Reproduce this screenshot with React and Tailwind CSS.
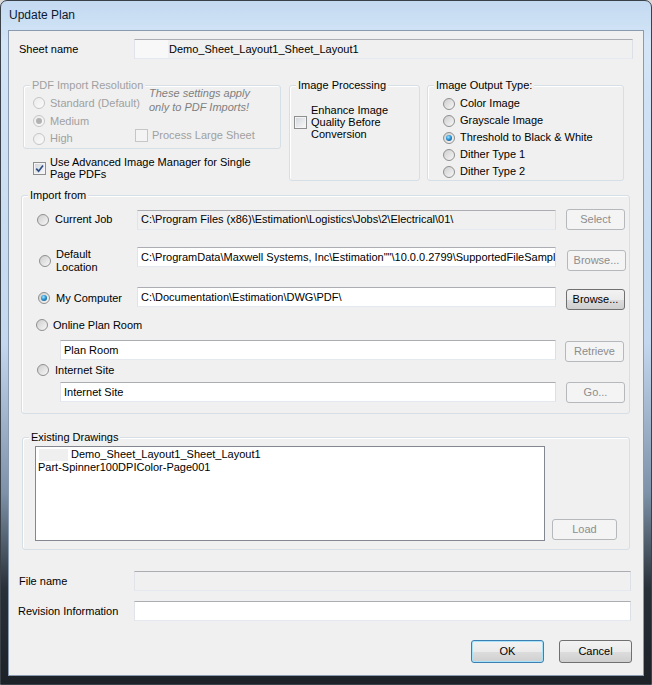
import React from 'react';

// Win7-style dialog controls
function Radio({ checked, disabled, className = '' }) {
  const ring = disabled
    ? 'border-[#c6c6c6] bg-[linear-gradient(135deg,#ebebeb,#fbfbfb)]'
    : 'border-[#8e8f8f] bg-[linear-gradient(135deg,#cdcdcd,#f8f8f8)]';
  return (
    <span className={`flex h-[12px] w-[12px] shrink-0 items-center justify-center rounded-full border ${ring} ${className}`}>
      {checked && (
        <span
          className={
            disabled
              ? 'h-[6px] w-[6px] rounded-full bg-[#b2b2b2]'
              : 'h-[6px] w-[6px] rounded-full bg-[radial-gradient(circle_at_40%_35%,#9fe6ff_0%,#2b94d4_45%,#0b3c66_100%)]'
          }
        />
      )}
    </span>
  );
}

function Check({ checked, disabled }) {
  return (
    <span
      className={`flex h-[13px] w-[13px] shrink-0 items-center justify-center border ${
        disabled
          ? 'border-[#c6c6c6] bg-[#f4f4f4]'
          : 'border-[#8e8f8f] bg-[linear-gradient(135deg,#d0d4da,#fafafa)] shadow-[inset_0_0_0_1px_#f4f4f4]'
      }`}
    >
      {checked && (
        <svg width="9" height="9" viewBox="0 0 9 9">
          <path d="M1.2 4.6 L3.6 7.2 L8 1.4" fill="none" stroke="#2f4f86" strokeWidth="1.7" />
        </svg>
      )}
    </span>
  );
}

function Btn({ children, disabled, primary, className = '' }) {
  let look = 'border-[#707070] bg-[linear-gradient(#f2f2f2_0%,#ebebeb_50%,#dddddd_50%,#cfcfcf_100%)] text-black';
  if (disabled) look = 'border-[#b5b9bc] bg-[#f4f4f4] text-[#8d8d8d]';
  if (primary)
    look =
      'border-[#3c7fb1] bg-[linear-gradient(#f2f2f2_0%,#ebebeb_50%,#dddddd_50%,#cfcfcf_100%)] text-black shadow-[inset_0_0_0_1px_#a6e2fa]';
  return (
    <button type="button" className={`flex shrink-0 items-center justify-center rounded-[3px] border ${look} ${className}`}>
      {children}
    </button>
  );
}

function Field({ children, disabled, className = '' }) {
  return (
    <div
      className={`flex h-[20px] shrink-0 items-center overflow-hidden whitespace-nowrap border border-t-[#abadb3] border-l-[#e2e3ea] border-r-[#dbdfe6] border-b-[#e3e9ef] ${
        disabled ? 'bg-[#f0f0f0]' : 'bg-white'
      } ${className}`}
    >
      {children}
    </div>
  );
}

function Group({ label, disabled, className = '', children }) {
  return (
    <div className={`relative shrink-0 rounded-[3px] border border-[#d5dfe5] shadow-[inset_1px_1px_0_#ffffff] ${className}`}>
      <span className={`absolute -top-[7px] left-[6px] bg-[#f0f0f0] px-[2px] leading-[13px] ${disabled ? 'text-[#a0a0a0]' : ''}`}>
        {label}
      </span>
      {children}
    </div>
  );
}

export default function App() {
  return (
    <div className="h-[685px] w-[652px] whitespace-nowrap bg-[#d9d9d9] font-['Liberation_Sans',Arial,sans-serif] text-[11px] leading-[13px] text-black">
      <div className="flex h-[685px] w-[652px] flex-col rounded-t-[7px] border border-[#3b4148] bg-[linear-gradient(180deg,#c4daf1_0%,#d3e5f7_6%,#c3d8ee_50%,#7d92a8_72%,#283038_86%,#1d2228_100%)]">
        <div className="flex h-[29px] items-center pl-[8px] text-[12px] text-[#0b1a33]">Update Plan</div>

        <div className="ml-[7px] h-[646px] w-[636px] border border-[#8a9bb0] bg-[#f0f0f0]">
          {/* sheet name */}
          <div className="mt-[8px] flex h-[20px] items-center">
            <span className="ml-[10px] w-[115px]">Sheet name</span>
            <Field disabled className="w-[499px]">
              <span className="mr-[1px] h-[18px] w-[33px] bg-[#f8f8f8]" />
              Demo_Sheet_Layout1_Sheet_Layout1
            </Field>
          </div>

          {/* settings row */}
          <div className="ml-[14px] mt-[26px] flex items-start">
            <div className="w-[258px] shrink-0">
              <Group label="PDF Import Resolution" disabled className="flex h-[64px] text-[#a0a0a0]">
                <div className="w-[111px] shrink-0 pl-[9px] pt-[8px]">
                  <div className="flex h-[18px] items-center gap-[5px]">
                    <Radio disabled />
                    <span>Standard (Default)</span>
                  </div>
                  <div className="flex h-[18px] items-center gap-[5px]">
                    <Radio disabled checked />
                    <span>Medium</span>
                  </div>
                  <div className="flex h-[17px] items-center gap-[5px]">
                    <Radio disabled />
                    <span>High</span>
                  </div>
                </div>
                <div className="pt-[1px]">
                  <div className="pl-[14px] italic leading-[13.5px] text-[#7f7f7f]">
                    These settings apply
                    <br />
                    only to PDF Imports!
                  </div>
                  <div className="mt-[15px] flex h-[13px] items-center gap-[4px]">
                    <Check disabled />
                    <span>Process Large Sheet</span>
                  </div>
                </div>
              </Group>
              <div className="ml-[10px] mt-[7px] flex items-center gap-[4px]">
                <Check checked />
                <span className="leading-[12px]">
                  Use Advanced Image Manager for Single
                  <br />
                  Page PDFs
                </span>
              </div>
            </div>

            <Group label="Image Processing" className="ml-[8px] h-[96px] w-[131px]">
              <div className="flex items-center gap-[4px] pl-[4px] pt-[18px]">
                <Check />
                <span className="leading-[12px]">
                  Enhance Image
                  <br />
                  Quality Before
                  <br />
                  Conversion
                </span>
              </div>
            </Group>

            <Group label="Image Output Type:" className="ml-[7px] h-[96px] w-[197px]">
              <div className="pl-[15px] pt-[9px]">
                {['Color Image', 'Grayscale Image', 'Threshold to Black & White', 'Dither Type 1', 'Dither Type 2'].map((t, i) => (
                  <div key={t} className="flex h-[17px] items-center gap-[5px]">
                    <Radio checked={i === 2} />
                    <span>{t}</span>
                  </div>
                ))}
              </div>
            </Group>
          </div>

          {/* import from */}
          <Group label="Import from" className="ml-[12px] mt-[14px] h-[219px] w-[609px]">
            <div className="pt-[12px]">
              <div className="flex h-[23px] items-center">
                <div className="flex w-[115px] shrink-0 items-center">
                  <Radio className="ml-[15px]" />
                  <span className="ml-[6px]">Current Job</span>
                </div>
                <Field disabled className="w-[419px] pl-[3px]">
                  C:\Program Files (x86)\Estimation\Logistics\Jobs\2\Electrical\01\
                </Field>
                <Btn disabled className="ml-[10px] h-[21px] w-[59px]">Select</Btn>
              </div>

              <div className="mt-[16px] flex h-[27px] items-start">
                <div className="flex h-[27px] w-[115px] shrink-0 items-center">
                  <Radio className="ml-[17px]" />
                  <span className="ml-[5px]">
                    Default
                    <br />
                    Location
                  </span>
                </div>
                <Field className="w-[419px] pl-[3px]">
                  C:\ProgramData\Maxwell Systems, Inc\Estimation""\10.0.0.2799\SupportedFileSamples\
                </Field>
                <Btn disabled className="ml-[11px] mt-[3px] h-[21px] w-[59px]">Browse...</Btn>
              </div>

              <div className="mt-[13px] flex h-[22px] items-start">
                <div className="flex h-[22px] w-[115px] shrink-0 items-center">
                  <Radio checked className="ml-[16px]" />
                  <span className="ml-[6px]">My Computer</span>
                </div>
                <Field className="w-[419px] pl-[3px]">C:\Documentation\Estimation\DWG\PDF\</Field>
                <Btn className="ml-[10px] mt-[2px] h-[21px] w-[59px]">Browse...</Btn>
              </div>

              <div className="mt-[9px] flex h-[14px] items-center">
                <Radio className="ml-[14px]" />
                <span className="ml-[5px]">Online Plan Room</span>
              </div>

              <div className="mt-[8px] flex h-[22px] items-start">
                <Field className="ml-[38px] w-[496px] pl-[3px]">Plan Room</Field>
                <Btn disabled className="ml-[9px] mt-[1px] h-[21px] w-[59px]">Retrieve</Btn>
              </div>

              <div className="mt-[1px] flex h-[14px] items-center">
                <Radio className="ml-[15px]" />
                <span className="ml-[6px]">Internet Site</span>
              </div>

              <div className="mt-[5px] flex items-start">
                <Field className="ml-[38px] w-[496px] pl-[3px]">Internet Site</Field>
                <Btn disabled className="ml-[10px] h-[21px] w-[59px]">Go...</Btn>
              </div>
            </div>
          </Group>

          {/* existing drawings */}
          <Group label="Existing Drawings" className="ml-[13px] mt-[23px] h-[113px] w-[608px]">
            <div className="flex items-end pl-[12px] pt-[8px]">
              <div className="h-[95px] w-[510px] shrink-0 border border-[#828790] bg-white pt-[1px]">
                <div className="flex h-[13px] items-center">
                  <span className="ml-[3px] h-[12px] w-[29px] bg-[#efefef]" />
                  <span className="ml-[3px]">Demo_Sheet_Layout1_Sheet_Layout1</span>
                </div>
                <div className="flex h-[13px] items-center pl-[2px]">Part-Spinner100DPIColor-Page001</div>
              </div>
              <Btn disabled className="mb-[1px] ml-[7px] h-[21px] w-[65px]">Load</Btn>
            </div>
          </Group>

          <div className="mt-[21px] flex h-[20px] items-center">
            <span className="ml-[10px] w-[115px]">File name</span>
            <Field disabled className="w-[497px]" />
          </div>
          <div className="mt-[10px] flex h-[20px] items-center">
            <span className="ml-[9px] w-[116px]">Revision Information</span>
            <Field className="w-[497px]" />
          </div>

          <div className="mt-[19px] flex">
            <Btn primary className="ml-[462px] h-[23px] w-[73px]">OK</Btn>
            <Btn className="ml-[15px] h-[23px] w-[73px]">Cancel</Btn>
          </div>
        </div>
      </div>
    </div>
  );
}
